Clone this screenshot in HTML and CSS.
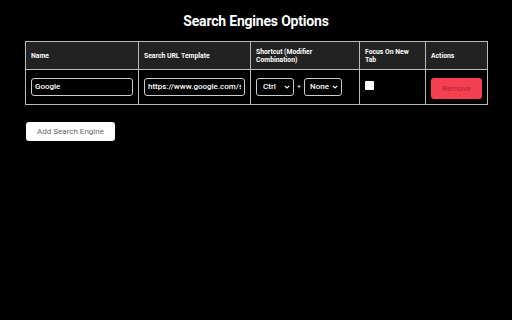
FILE: index.html
```html
<!DOCTYPE html>
<html lang="en">
<head>
  <meta charset="UTF-8" />
  <title>Search Engines Options</title>
  <link rel="stylesheet" href="styles.css">
</head>
<body>
  <h1 class="title">Search Engines Options</h1>

  <table class="engines">
    <thead>
      <tr>
        <th class="col-name">Name</th>
        <th class="col-url">Search URL Template</th>
        <th class="col-shortcut">Shortcut (Modifier Combination)</th>
        <th class="col-focus">Focus On New Tab</th>
        <th class="col-actions">Actions</th>
      </tr>
    </thead>
    <tbody>
      <tr>
        <td><input class="text-input" type="text" value="Google" /></td>
        <td><input class="text-input" type="text" value="https://www.google.com/search?q=%s" /></td>
        <td>
          <div class="shortcut">
            <span class="select sel-mod">Ctrl
              <svg width="6" height="4" viewBox="0 0 6 4"><path d="M0.8 0.8 L3 3 L5.2 0.8" fill="none" stroke="#fff" stroke-width="1.1"/></svg>
            </span>
            <span class="plus">+</span>
            <span class="select sel-key">None
              <svg width="6" height="4" viewBox="0 0 6 4"><path d="M0.8 0.8 L3 3 L5.2 0.8" fill="none" stroke="#fff" stroke-width="1.1"/></svg>
            </span>
          </div>
        </td>
        <td><span class="checkbox"></span></td>
        <td><button class="remove">Remove</button></td>
      </tr>
    </tbody>
  </table>

  <button class="add">Add Search Engine</button>
</body>
</html>
```

FILE: styles.css
```css
body {
  margin: 0;
  padding: 0 25px;
  background-color: #000;
  color: #fff;
  font-family: Roboto, "Liberation Sans", sans-serif;
}
.title {
  margin: 0;
  padding-top: 13px;
  height: 28px;
  text-align: center;
  font-size: 14px;
  font-weight: bold;
  letter-spacing: -0.2px;
}
.engines {
  width: 462px;
  border-collapse: collapse;
  border: 1px solid #bbb;
  table-layout: fixed;
}
.engines th,
.engines td {
  border: 1px solid #bbb;
  padding: 0 5px;
  text-align: left;
  vertical-align: middle;
}
.engines th {
  height: 26px;
  background-color: #222;
  font-size: 6.8px;
  line-height: 8px;
  font-weight: bold;
  padding-top: 1px;
}
.engines td {
  height: 34px;
}
.col-name { width: 102px; }
.col-url { width: 101px; }
.col-shortcut { width: 98px; }
.col-focus { width: 55px; }
.col-actions { width: 51px; }
.text-input {
  display: block;
  width: 100%;
  height: 18px;
  margin-top: -1px;
  box-sizing: border-box;
  padding: 0 3px;
  background-color: #000;
  border: 1px solid #ccc;
  border-radius: 3px;
  color: #fff;
  font-family: inherit;
  font-size: 8px;
  font-weight: 500;
}
.shortcut {
  display: flex;
  align-items: center;
  margin-top: -1px;
}
.select {
  display: flex;
  align-items: center;
  justify-content: space-between;
  height: 18px;
  box-sizing: border-box;
  padding: 0 3px 0 6px;
  border: 1px solid #ccc;
  border-radius: 3px;
  font-size: 8px;
  font-weight: 500;
}
.sel-mod { width: 38px; }
.sel-key { width: 38px; padding-left: 5px; }
.plus {
  width: 10px;
  text-align: center;
  font-size: 7px;
}
.checkbox {
  display: block;
  width: 9px;
  height: 9px;
  margin-top: -4px;
  background-color: #fff;
  border-radius: 1px;
}
.remove {
  display: block;
  width: 51px;
  height: 21px;
  margin-top: 2px;
  background-color: #f5414f;
  color: #a82430;
  border: none;
  border-radius: 3px;
  font-family: inherit;
  font-size: 8px;
  padding: 0;
}
.add {
  display: block;
  margin-top: 17px;
  margin-left: 1px;
  width: 89px;
  height: 19px;
  padding: 0;
  background-color: #fff;
  color: #666;
  border: none;
  border-radius: 3px;
  font-family: inherit;
  font-size: 8px;
}
```
